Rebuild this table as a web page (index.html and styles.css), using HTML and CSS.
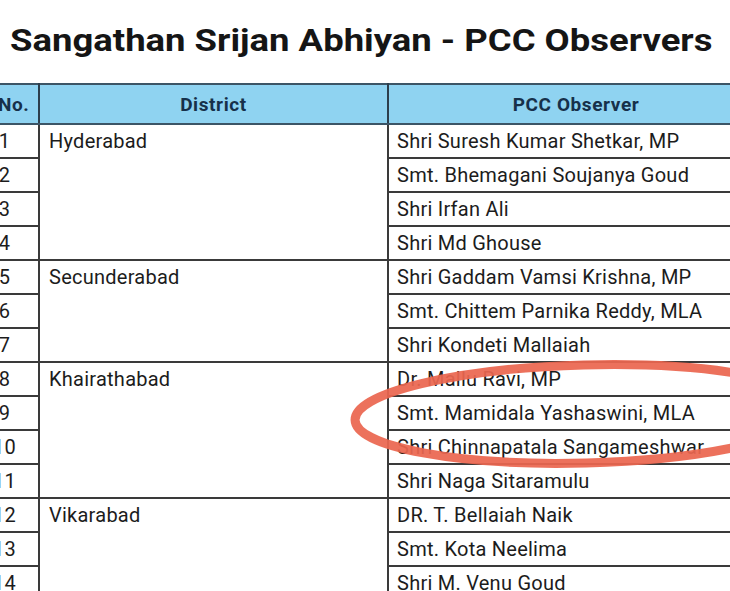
FILE: index.html
```html
<!DOCTYPE html>
<html lang="en">
<head>
<meta charset="utf-8">
<title>Sangathan Srijan Abhiyan - PCC Observers</title>
<link rel="stylesheet" href="styles.css">
</head>
<body>
<div class="page">
  <h1 class="title"><span class="title-text">Sangathan Srijan Abhiyan - PCC Observers</span></h1>
  <div class="table-wrap">
    <table class="obs">
      <colgroup>
        <col class="c-no"><col class="c-dist"><col class="c-obs">
      </colgroup>
      <thead>
        <tr><th>S.No.</th><th>District</th><th>PCC Observer</th></tr>
      </thead>
      <tbody>
        <tr><td class="no">1</td><td class="dist" rowspan="4">Hyderabad</td><td>Shri Suresh Kumar Shetkar, MP</td></tr>
        <tr><td class="no">2</td><td>Smt. Bhemagani Soujanya Goud</td></tr>
        <tr><td class="no">3</td><td>Shri Irfan Ali</td></tr>
        <tr><td class="no">4</td><td>Shri Md Ghouse</td></tr>
        <tr><td class="no">5</td><td class="dist" rowspan="3">Secunderabad</td><td>Shri Gaddam Vamsi Krishna, MP</td></tr>
        <tr><td class="no">6</td><td>Smt. Chittem Parnika Reddy, MLA</td></tr>
        <tr><td class="no">7</td><td>Shri Kondeti Mallaiah</td></tr>
        <tr><td class="no">8</td><td class="dist" rowspan="4">Khairathabad</td><td>Dr. Mallu Ravi, MP</td></tr>
        <tr><td class="no">9</td><td>Smt. Mamidala Yashaswini, MLA</td></tr>
        <tr><td class="no">10</td><td>Shri Chinnapatala Sangameshwar</td></tr>
        <tr><td class="no">11</td><td>Shri Naga Sitaramulu</td></tr>
        <tr><td class="no">12</td><td class="dist" rowspan="3">Vikarabad</td><td>DR. T. Bellaiah Naik</td></tr>
        <tr><td class="no">13</td><td>Smt. Kota Neelima</td></tr>
        <tr><td class="no">14</td><td>Shri M. Venu Goud</td></tr>
      </tbody>
    </table>
    <svg class="circle" width="440" height="130" viewBox="0 0 440 130" aria-hidden="true">
      <ellipse cx="245" cy="64" rx="230" ry="49" transform="rotate(-1.5 245 64)" fill="none" stroke="#eb6650" stroke-width="9" stroke-opacity="0.93"/>
    </svg>
  </div>
</div>
</body>
</html>
```

FILE: styles.css
```css
html, body {
  margin: 0;
  padding: 0;
  background: #ffffff;
  overflow: hidden;
}
.page {
  width: 730px;
  height: 591px;
  overflow: hidden;
  font-family: Roboto, "Liberation Sans", Arial, sans-serif;
  color: #1e1e1e;
}
.title {
  margin: 0;
  padding: 22px 0 0 10px;
  height: 61px;
  box-sizing: border-box;
  font-size: 32px;
  font-weight: 700;
  color: #151515;
  white-space: nowrap;
  line-height: 36px;
}
.title-text {
  display: inline-block;
  transform: scaleX(1.14);
  transform-origin: left center;
}
.table-wrap {
  position: relative;
  margin-top: 22px;
  margin-left: -31px;
  width: 800px;
}
.obs {
  border-collapse: collapse;
  table-layout: fixed;
  width: 794px;
  font-size: 20px;
  letter-spacing: 0.25px;
}
.c-no { width: 69px; }
.c-dist { width: 349px; }
.c-obs { width: 376px; }
.obs th {
  background: #8fd3f1;
  color: #16304a;
  font-weight: 700;
  font-size: 19px;
  letter-spacing: 0.6px;
  height: 38px;
  padding: 0;
  border-top: 2.5px solid #3c5566;
  border-bottom: 2.5px solid #3c5566;
  border-left: 2px solid #2c3e4c;
  border-right: 2px solid #2c3e4c;
  text-align: center;
}
.obs td {
  height: 32px;
  padding: 0 8px;
  border: 2px solid #3a3a3a;
  border-top-width: 1.5px;
  white-space: nowrap;
  overflow: hidden;
  color: #1c1c1c;
  line-height: 32px;
}
.obs td.no {
  text-align: center;
  padding: 0;
}
.obs td.dist {
  vertical-align: top;
  padding-left: 9px;
}
.circle {
  position: absolute;
  left: 371px;
  top: 267px;
  pointer-events: none;
}
```
